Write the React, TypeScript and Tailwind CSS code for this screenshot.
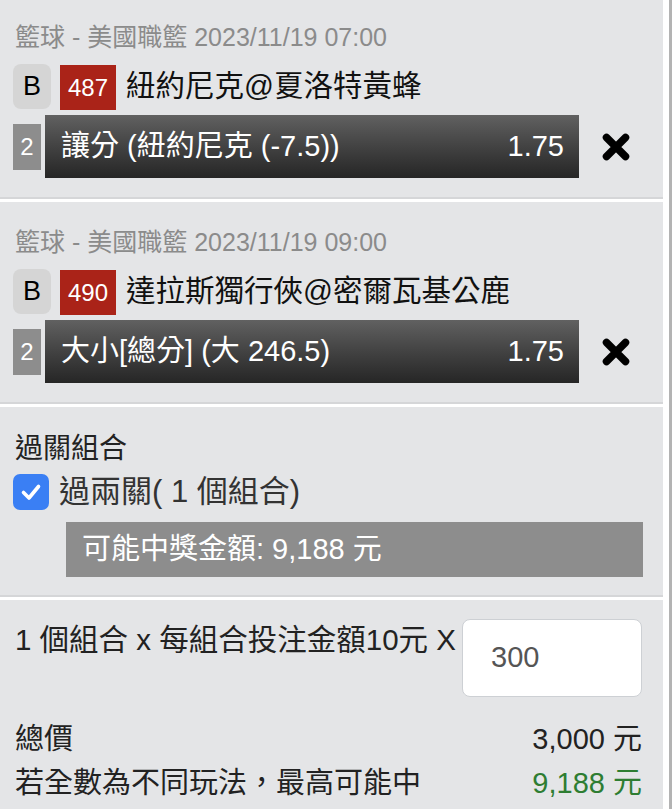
const FONT = {
  fontFamily: '"Liberation Sans", "Noto Sans CJK TC", sans-serif',
};

type Bet = {
  id: number;
  time: string;
  code: string;
  match: string;
  pick: string;
  odds: string;
};

const bets: Bet[] = [
  {
    id: 1,
    time: "2023/11/19 07:00",
    code: "487",
    match: "紐約尼克@夏洛特黃蜂",
    pick: "讓分 (紐約尼克 (-7.5))",
    odds: "1.75",
  },
  {
    id: 2,
    time: "2023/11/19 09:00",
    code: "490",
    match: "達拉斯獨行俠@密爾瓦基公鹿",
    pick: "大小[總分] (大 246.5)",
    odds: "1.75",
  },
];

const RemoveIcon = () => (
  <svg width="30" height="28" viewBox="0 0 30 28" fill="none">
    <path
      d="M5.5 4.5 L24.5 23.5 M24.5 4.5 L5.5 23.5"
      stroke="#000"
      strokeWidth="7.5"
      strokeLinecap="round"
    />
  </svg>
);

const BetCard = ({ bet }: { bet: Bet }) => (
  <div className="bg-[#e4e5e7] border-b-2 border-b-[#d5d6d8] mb-[3px] pt-[23px] pb-[19px] pl-[13px]">
    <div className="ml-[2px] text-[25px] leading-[34px] text-[#8b8b8b] whitespace-nowrap">
      籃球 - 美國職籃 {bet.time}
    </div>
    <div className="flex items-center mt-[9px] h-[47px]">
      <div className="w-[38px] h-[45px] rounded-lg bg-[#d5d5d5] flex items-center justify-center text-[27px] text-black">
        B
      </div>
      <div className="ml-[9px] w-[56px] h-[45px] mt-[2px] bg-[#aa2318] flex items-center justify-center text-[24px] text-white">
        {bet.code}
      </div>
      <div className="ml-[10px] text-[29.5px] text-[#111] whitespace-nowrap">
        {bet.match}
      </div>
    </div>
    <div className="flex items-center mt-[5px]">
      <div className="w-[28px] h-[46px] bg-[#8d8d8d] flex items-center justify-center text-[24px] text-white">
        2
      </div>
      <div className="ml-[4px] w-[534px] h-[63px] bg-gradient-to-b from-[#616161] to-[#262626] flex items-center justify-between pl-[16px] pr-[15px] text-white text-[29px]">
        <span className="whitespace-nowrap">{bet.pick}</span>
        <span>{bet.odds}</span>
      </div>
      <div className="ml-[22px]">
        <RemoveIcon />
      </div>
    </div>
  </div>
);

const App = () => {
  return (
    <div className="w-[672px] h-[809px] overflow-hidden bg-white" style={FONT}>
      <div className="flex h-full border-r-[3px] border-r-[#b3b3b3]">
        <div className="w-[663px] -mt-[3px]">
          {bets.map((bet) => (
            <BetCard key={bet.id} bet={bet} />
          ))}

          <div className="bg-[#e4e5e7] border-b-2 border-b-[#d5d6d8] mb-[3px] pt-[24px] pb-[18px] pl-[13px] pr-[20px]">
            <div className="ml-[2px] text-[28px] leading-[36px] text-[#222]">
              過關組合
            </div>
            <div className="flex items-center mt-[7px] h-[36px]">
              <div className="w-[36px] h-[36px] rounded-[7px] bg-[#3a7ff4] flex items-center justify-center">
                <svg width="24" height="24" viewBox="0 0 24 24" fill="none">
                  <path
                    d="M4.5 12.5 L10 18 L19.5 6.5"
                    stroke="#fff"
                    strokeWidth="3.6"
                    strokeLinecap="round"
                    strokeLinejoin="round"
                  />
                </svg>
              </div>
              <div className="ml-[10px] text-[31px] text-[#333] whitespace-nowrap">
                過兩關( 1 個組合)
              </div>
            </div>
            <div className="ml-[53px] mt-[12px] h-[55px] bg-[#8d8d8d] flex items-center pl-[16px] text-[29px] text-white whitespace-nowrap">
              可能中獎金額: 9,188 元
            </div>
          </div>

          <div className="bg-[#e4e5e7] h-[220px] pt-[19px] pl-[15px] pr-[21px]">
            <div className="flex justify-between items-start">
              <div className="mt-[1px] text-[29.5px] leading-[40px] text-[#222] whitespace-nowrap">
                1 個組合 x 每組合投注金額10元 X
              </div>
              <div className="w-[180px] h-[78px] shrink-0 bg-white border border-[#cdd0d4] rounded-lg flex items-center pl-[28px] text-[29px] text-[#555]">
                300
              </div>
            </div>
            <div className="mt-[20px] flex justify-between text-[29px] leading-[44px] text-[#222]">
              <span>總價</span>
              <span>3,000 元</span>
            </div>
            <div className="flex justify-between text-[29px] leading-[44px] text-[#222]">
              <span className="whitespace-nowrap">若全數為不同玩法，最高可能中</span>
              <span className="text-[#2e7d32]">9,188 元</span>
            </div>
          </div>
        </div>
      </div>
    </div>
  );
};

export default App;
